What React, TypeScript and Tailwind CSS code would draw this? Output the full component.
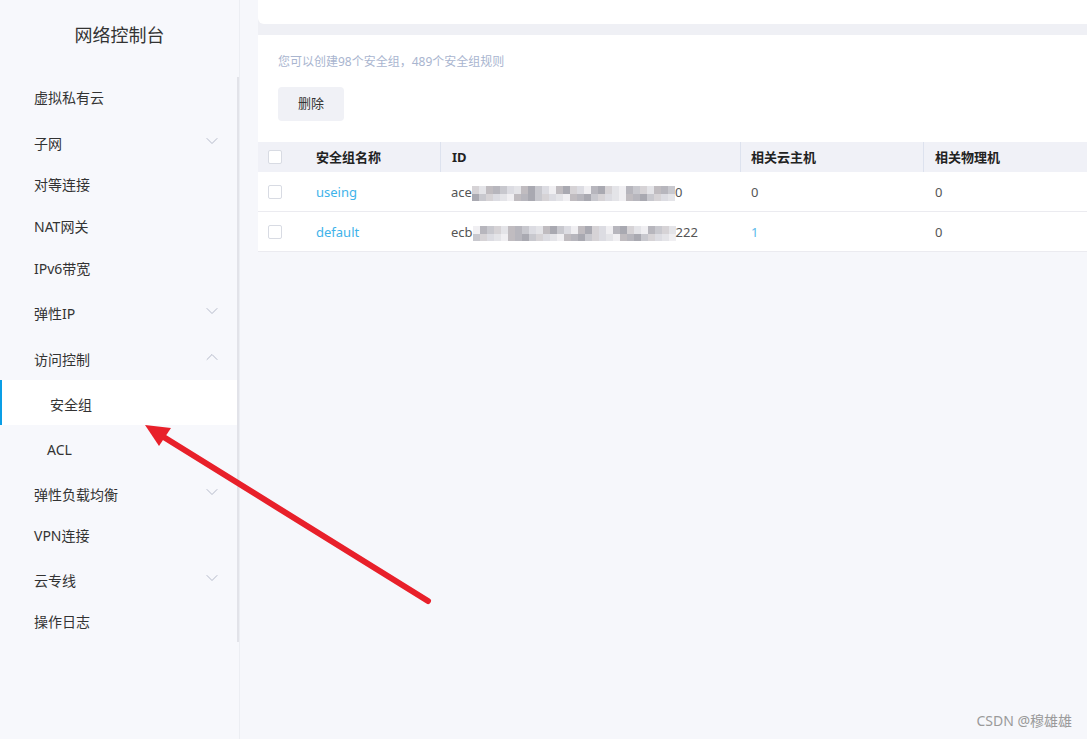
import { ChevronDown, ChevronUp } from "lucide-react";

type MenuItem = {
  label: string;
  h: "h-[45px]" | "h-[41px]";
  nudge: string;
  arrow?: "down" | "up";
  sub?: boolean;
  active?: boolean;
};

const MENU: MenuItem[] = [
  { label: "虚拟私有云", h: "h-[45px]", nudge: "-top-[2px]" },
  { label: "子网", h: "h-[45px]", nudge: "-top-[1px]", arrow: "down" },
  { label: "对等连接", h: "h-[41px]", nudge: "-top-[3px]" },
  { label: "NAT网关", h: "h-[41px]", nudge: "-top-[2px]" },
  { label: "IPv6带宽", h: "h-[41px]", nudge: "-top-[1px]" },
  { label: "弹性IP", h: "h-[45px]", nudge: "top-[1px]", arrow: "down" },
  { label: "访问控制", h: "h-[45px]", nudge: "top-[2px]", arrow: "up" },
  { label: "安全组", h: "h-[45px]", nudge: "top-[2px]", sub: true, active: true },
  { label: "ACL", h: "h-[45px]", nudge: "top-[2px]", sub: true },
  { label: "弹性负载均衡", h: "h-[45px]", nudge: "top-[2px]", arrow: "down" },
  { label: "VPN连接", h: "h-[41px]", nudge: "top-0" },
  { label: "云专线", h: "h-[45px]", nudge: "top-[2px]", arrow: "down" },
  { label: "操作日志", h: "h-[41px]", nudge: "top-0" },
];

// pixelated mosaic shades for the blurred ids
const SHADES = [
  "bg-[#c8c8ce]",
  "bg-[#e4e4e8]",
  "bg-[#b7b6bd]",
  "bg-[#d6d3d6]",
  "bg-[#f0eff2]",
  "bg-[#a9a9b1]",
  "bg-[#dcdce2]",
  "bg-[#c0bcc0]",
];

function Mosaic({ seed }: { seed: number }) {
  const top = Array.from({ length: 29 }, (_, i) => SHADES[(i * 5 + seed * 3 + (i % 3)) % SHADES.length]);
  const bottom = Array.from({ length: 29 }, (_, i) => SHADES[(i * 3 + seed + 4) % SHADES.length]);
  return (
    <span className="inline-flex flex-col">
      <span className="flex">
        {top.map((c, i) => (
          <span key={i} className={`w-[7px] h-[8px] ${c}`} />
        ))}
      </span>
      <span className="flex">
        {bottom.map((c, i) => (
          <span key={i} className={`w-[7px] h-[7px] ${c}`} />
        ))}
      </span>
    </span>
  );
}

function Checkbox() {
  return <span className="block w-[14px] h-[14px] rounded-[2px] border border-[#d8dbe3] bg-white" />;
}

const ROWS = [
  { name: "useing", pre: "ace", post: "0", vm: "0", vmLink: false, pm: "0", seed: 1 },
  { name: "default", pre: "ecb", post: "222", vm: "1", vmLink: true, pm: "0", seed: 4 },
];

export default function App() {
  return (
    <div
      className="relative flex w-[1087px] h-[739px] overflow-hidden bg-[#f6f7fb] text-[#333]"
      style={{ fontFamily: '"Noto Sans", "Noto Sans CJK SC", sans-serif' }}
    >
      <aside className="w-[240px] shrink-0 bg-[#f7f8fc] border-r border-[#eceef3] flex flex-col">
        <div className="h-[77px] flex items-start justify-center pt-[22px] text-[18px] text-[#333]">
          网络控制台
        </div>
        <nav className="border-r-2 border-[#e2e3e9]">
          {MENU.map((m) => (
            <div
              key={m.label}
              className={`relative flex items-center justify-between text-[14px] ${m.h} ${
                m.sub ? (m.label === "ACL" ? "pl-[47px]" : "pl-[50px]") : "pl-[34px]"
              } pr-[15px] ${m.active ? "bg-white" : ""}`}
            >
              {m.active && <span className="absolute left-0 top-0 bottom-0 w-[2px] bg-[#0a9ee6]" />}
              <span className={`relative ${m.nudge}`}>{m.label}</span>
              {m.arrow === "down" && (
                <ChevronDown size={20} strokeWidth={1.1} className={`relative text-[#aeb4c4] -mt-[6px] ${m.nudge}`} />
              )}
              {m.arrow === "up" && (
                <ChevronUp size={20} strokeWidth={1.1} className={`relative text-[#aeb4c4] -mt-[6px] ${m.nudge}`} />
              )}
            </div>
          ))}
        </nav>
      </aside>

      <main className="flex-1 pl-[18px] flex flex-col">
        <div className="h-[35px] bg-[#eff0f5] shrink-0">
          <div className="h-[24px] bg-white rounded-bl-[6px]" />
        </div>
        <div className="bg-white">
          <div className="px-[20px] pt-[18px] text-[12px] text-[#a9b5cf]">您可以创建98个安全组，489个安全组规则</div>
          <div className="px-[20px] pt-[16px] pb-[21px]">
            <button className="w-[66px] h-[34px] rounded-[4px] bg-[#f0f1f6] text-[13px] text-[#333]">删除</button>
          </div>
          <div className="text-[13px]">
            <div className="flex h-[30px] items-center bg-[#f0f1f7] font-bold text-[#222]">
              <div className="w-[48px] pl-[10px]">
                <Checkbox />
              </div>
              <div className="w-[134px] pl-[10px] pt-[2px]">安全组名称</div>
              <div className="w-[300px] pl-[11px] pt-[2px] h-full flex items-center border-l border-[#dde2ee]">ID</div>
              <div className="w-[183px] pl-[10px] pt-[2px] h-full flex items-center border-l border-[#dde2ee]">相关云主机</div>
              <div className="flex-1 pl-[11px] pt-[2px] h-full flex items-center border-l border-[#dde2ee]">相关物理机</div>
            </div>
            {ROWS.map((r) => (
              <div key={r.name} className="flex h-[40px] items-center border-b border-[#ebebf0] text-[#555]">
                <div className="w-[48px] pl-[10px]">
                  <Checkbox />
                </div>
                <div className="w-[134px] pl-[10px] pt-[3px] text-[#3fb3ea]">{r.name}</div>
                <div className="w-[300px] pl-[11px] pt-[3px] flex items-center">
                  <span>{r.pre}</span>
                  <Mosaic seed={r.seed} />
                  <span>{r.post}</span>
                </div>
                <div className={`w-[183px] pl-[11px] pt-[3px] ${r.vmLink ? "text-[#5cb8ea]" : ""}`}>{r.vm}</div>
                <div className="flex-1 pl-[12px] pt-[3px]">{r.pm}</div>
              </div>
            ))}
          </div>
        </div>
      </main>

      <div className="absolute right-[15px] bottom-[8px] text-[14px] text-[#9a9a9a]">CSDN @穆雄雄</div>

      <svg className="absolute left-0 top-0 pointer-events-none" width="1087" height="739">
        <line x1="428" y1="601" x2="162" y2="436" stroke="#e8202a" strokeWidth="6" strokeLinecap="round" />
        <polygon points="145,425 171,428 159,446" fill="#e8202a" />
      </svg>
    </div>
  );
}
